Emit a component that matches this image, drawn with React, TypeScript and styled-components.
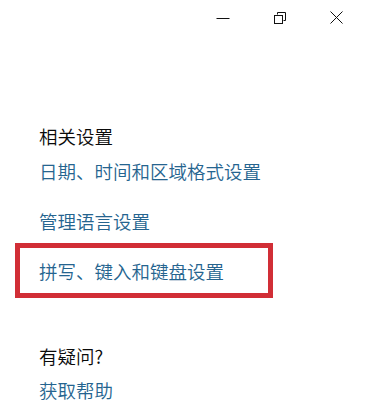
import styled, { createGlobalStyle } from "styled-components";

const GlobalStyle = createGlobalStyle`
  html, body {
    margin: 0;
    padding: 0;
    background: #ffffff;
  }
  body {
    font-family: "Noto Sans CJK SC", "Noto Sans", sans-serif;
    font-weight: 350;
  }
`;

const Window = styled.div`
  width: 365px;
  height: 411px;
  background: #ffffff;
  overflow: hidden;
`;

const TitleBar = styled.div`
  display: flex;
  justify-content: flex-end;
  height: 35px;
`;

const CaptionButton = styled.div`
  width: 57px;
  height: 35px;
  display: flex;
  align-items: center;
  justify-content: center;
  color: #111111;
`;

const Content = styled.div`
  display: flex;
  flex-direction: column;
  align-items: flex-start;
  padding-left: 15px;
`;

const Heading = styled.div<{ $top: number }>`
  margin-top: ${(p) => p.$top}px;
  padding-left: 24px;
  font-size: 18.5px;
  line-height: 24px;
  color: #0a0a0a;
  white-space: nowrap;
`;

const Link = styled.div<{ $top: number }>`
  margin-top: ${(p) => p.$top}px;
  padding-left: 24px;
  font-size: 18.5px;
  line-height: 24px;
  color: #25648f;
  white-space: nowrap;
`;

const HighlightBox = styled.div<{ $top: number }>`
  margin-top: ${(p) => p.$top}px;
  box-sizing: border-box;
  width: 258px;
  height: 55px;
  border: 5px solid #d12e36;
  padding-left: 19px;
  display: flex;
  align-items: center;
  font-size: 18.5px;
  line-height: 24px;
  color: #25648f;
  white-space: nowrap;
`;

const MinimizeIcon = () => (
  <svg width="14" height="12" viewBox="0 0 14 12">
    <line x1="0.5" y1="6.5" x2="13.5" y2="6.5" stroke="currentColor" strokeWidth="1" />
  </svg>
);

const RestoreIcon = () => (
  <svg width="12" height="12" viewBox="0 0 12 12">
    <path d="M3.5 2.5 V0.5 H11.5 V8.5 H9.5" fill="none" stroke="currentColor" strokeWidth="1" />
    <rect x="0.5" y="3.5" width="8" height="8" fill="none" stroke="currentColor" strokeWidth="1" />
  </svg>
);

const CloseIcon = () => (
  <svg width="13" height="13" viewBox="0 0 13 13">
    <path d="M0.5 0.5 L12.5 12.5 M12.5 0.5 L0.5 12.5" fill="none" stroke="currentColor" strokeWidth="1" />
  </svg>
);

const App = () => {
  return (
    <Window>
      <GlobalStyle />
      <TitleBar>
        <CaptionButton>
          <MinimizeIcon />
        </CaptionButton>
        <CaptionButton>
          <RestoreIcon />
        </CaptionButton>
        <CaptionButton>
          <CloseIcon />
        </CaptionButton>
      </TitleBar>
      <Content>
        <Heading $top={89}>相关设置</Heading>
        <Link $top={11}>日期、时间和区域格式设置</Link>
        <Link $top={26}>管理语言设置</Link>
        <HighlightBox $top={10}>拼写、键入和键盘设置</HighlightBox>
        <Heading $top={46}>有疑问?</Heading>
        <Link $top={10}>获取帮助</Link>
      </Content>
    </Window>
  );
};

export default App;
